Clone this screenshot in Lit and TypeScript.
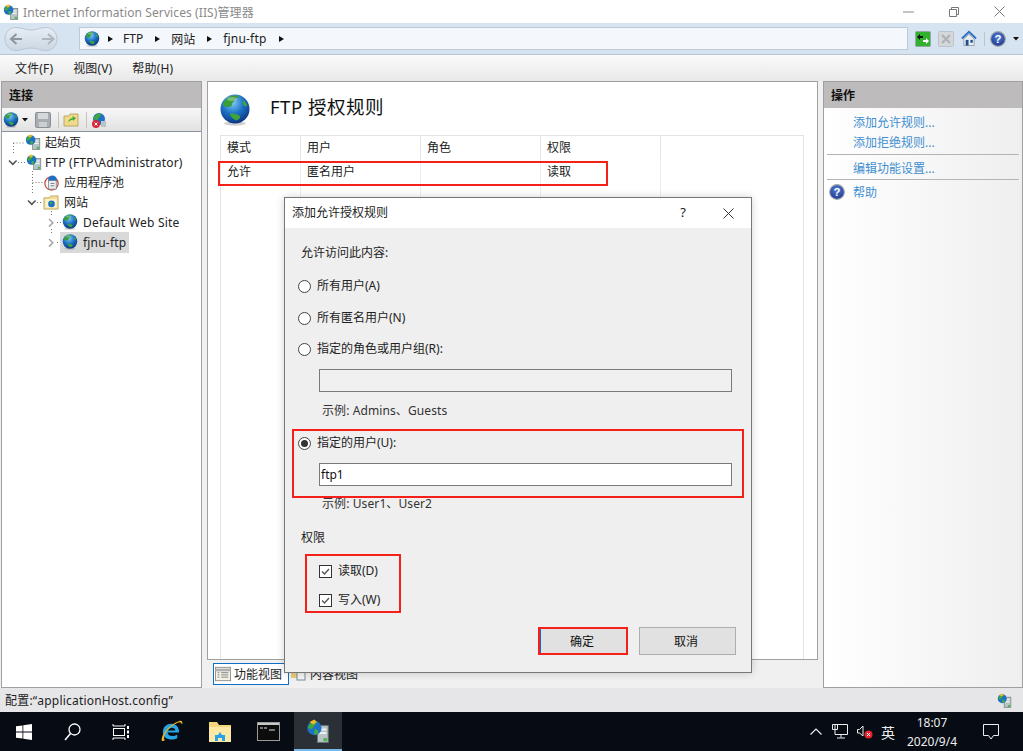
import { LitElement, html, css, svg } from "lit";
import { customElement } from "lit/decorators.js";

const globe = (s: number) => html`<svg width=${s} height=${s} viewBox="0 0 32 32" class="ico">
  <defs><radialGradient id="gb" cx="42%" cy="28%" r="78%"><stop offset="0" stop-color="#7fcbf4"/><stop offset=".5" stop-color="#1c70c6"/><stop offset="1" stop-color="#0a2c74"/></radialGradient></defs>
  <ellipse cx="16" cy="29.500" rx="11" ry="2.200" fill="#999" opacity=".45"/>
  <circle cx="16" cy="15" r="14.500" fill="url(#gb)"/>
  <path d="M10 3c3-1.300 7-1.800 10-1-1 2-3 2-4 4s-3 2.500-3 4.500-2 2.500-4 2.500-4-1-5-2C3.500 8.500 7 5 10 3z" fill="#3a9e38"/>
  <path d="M11 20c3-1 7 0 10 2 .8 1.600-1 3.500-3.500 4.500-2.500-1-6-3.500-6.500-6.500zM24 6c2 1 3.500 3 4.300 6-1.800.8-3.300 0-4.300-2z" fill="#3fa53a"/>
  <ellipse cx="13" cy="5" rx="5" ry="2" fill="#fff" opacity=".3"/>
</svg>`;

const server = (s: number) => html`<svg width=${s} height=${s} viewBox="0 0 20 20" class="ico">
  <rect x="9.500" y="5.500" width="9" height="14" fill="#b9c4c6" stroke="#67757a" stroke-width=".8"/>
  <rect x="11" y="8" width="6" height="1.500" fill="#f2f5f5"/><rect x="11" y="11" width="6" height="1.500" fill="#f2f5f5"/>
  <rect x="14.500" y="16" width="3" height="2.500" fill="#48b648"/>
  <circle cx="7" cy="7.500" r="6" fill="#1c70c6"/>
  <path d="M4 3.500c2-2 5-1.500 5-.5s-2 2-3 4-3 1.500-4 .5 1-3 2-4z" fill="#3fa83a"/>
  <path d="M7 8.500c2 0 4 1 3 3s-3 2-3 1z" fill="#46ad3c"/>
  <path d="M3 2.500l4-2 2 2-3 2z" fill="#f0b92c"/>
</svg>`;

const helpIcon = (s: number) => html`<svg width=${s} height=${s} viewBox="0 0 17 17" class="ico"><defs><radialGradient id="hb" cx="50%" cy="35%" r="65%"><stop offset="0" stop-color="#4f7fd8"/><stop offset="1" stop-color="#22388f"/></radialGradient></defs><circle cx="8.500" cy="8.500" r="7.800" fill="url(#hb)" stroke="#a0a4aa" stroke-width="1.200"/><text x="8.500" y="13" text-anchor="middle" font-size="12" font-weight="bold" fill="#fff" font-family="Liberation Sans">?</text></svg>`;

const tree = svg`<g stroke="#777" stroke-dasharray="1 2" fill="none"><path d="M13.500 143V154M13.500 143H24M18 162.500H25M32.500 171V195M32.500 182.500H43M37 202.500H43M51.500 211V215M51.500 229V235M57 222.500H61M57 242.500H61"/></g>
<g fill="none" stroke-width="1.600"><path stroke="#555" d="M9 160.500l3.800 3.800 3.800-3.800M28 200.500l3.800 3.800 3.800-3.800"/><path stroke="#a8a8a8" d="M49 219l3.800 3.800-3.800 3.800M49 239l3.800 3.800-3.800 3.800"/></g>`;

@customElement("app-root")
export class AppRoot extends LitElement {
  static styles = css`
    :host { display: block; width: 1023px; height: 751px; position: relative; overflow: hidden; background: #f0f0f0;
      font-family: "Noto Sans", "Noto Sans CJK SC", sans-serif; font-size: 12px; color: #1a1a1a; }
    * { box-sizing: border-box; }
    .ico { display: block; flex: none; }
    .ls { letter-spacing: .2px; }
    .page { display: flex; flex-direction: column; height: 751px; }
    .title { height: 23px; background: #fff; display: flex; align-items: center; padding: 0 2px 0 3px; gap: 4px; color: #8a8a8a; flex: none; letter-spacing: .1px; }
    .winbtns { margin-left: auto; display: flex; align-items: center; gap: 35px; padding-right: 16px; }
    .nav { height: 32px; background: #d6e3f0; border-bottom: 1px solid #b7c4d2; display: flex; align-items: center; padding: 0 0 0 4px; flex: none; }
    .backfwd { margin-right: 21px; flex: none; display: block; }
    .crumb { width: 829px; height: 23px; background: #f4f7fb; border: 1px solid #bcc9d6; display: flex; align-items: center; padding-left: 4px; flex: none; color: #222; }
    .crumb .ar { border-left: 5px solid #111; border-top: 3.500px solid transparent; border-bottom: 3.500px solid transparent; margin: 0 11px 0 12px; }
    .crumb .ar.first { margin: 0 10px 0 8px; }
    .navtools { display: flex; align-items: center; margin-left: 7px; gap: 7px; }
    .sep { width: 1px; height: 14px; background: #bcc5cf; }
    .menu { height: 26px; background: linear-gradient(#fbfbfb, #e8e8e8); display: flex; align-items: center; padding-left: 15px; gap: 20px; flex: none; color: #222; letter-spacing: .15px; }
    .main { flex: 1; display: flex; background: #f0f0f0; padding: 0 0 0 1px; min-height: 0; }
    .panel { border: 1px solid #a0a0a0; background: #fff; display: flex; flex-direction: column; }
    .left { width: 201px; margin-right: 5px; }
    .phead { height: 26px; background: #bdbbbb; font-weight: bold; display: flex; align-items: center; padding-left: 7px; color: #111; flex: none; }
    .tools { height: 24px; background: linear-gradient(#f7f7f7, #e2e2e2); border-bottom: 1px solid #8b93a3; display: flex; align-items: center; padding: 1px 0 0 1px; flex: none; }
    .tools i { width: 1px; height: 16px; background: #c8c4b6; flex: none; }
    .treeWrap { flex: 1; position: relative; }
    .treeLines { position: absolute; left: -2px; top: -132px; width: 201px; height: 300px; pointer-events: none; }
    .row { height: 20px; display: flex; align-items: center; white-space: nowrap; color: #222; position: relative; }
    .row.a { padding-left: 23px; gap: 4px; }
    .row.b { padding-left: 24px; gap: 3px; }
    .row.c { padding-left: 41px; gap: 4px; }
    .row.d { padding-left: 60px; gap: 5px; }
    .row.e { padding-left: 58px; }
    .sel { background: #d9d9d9; padding: 0 3px 0 2px; height: 21px; display: flex; align-items: center; gap: 5px; }
    .center { width: 611px; margin-right: 5px; display: flex; flex-direction: column; }
    .content { flex: 1; border: 1px solid #a0a0a0; background: #fff; padding: 0 13px 0 12px; display: flex; flex-direction: column; min-height: 0; }
    .ctitle { height: 53px; display: flex; align-items: center; gap: 19px; font-size: 18.500px; color: #111; flex: none; letter-spacing: .5px; }
    .ctitle svg { margin-top: 3px; margin-left: -1px; }
    .ctitle span { margin-top: -5px; }
    .table { flex: 1; border: 1px solid #e4e4e4; border-bottom: none; display: grid; grid-template-columns: 80px 120px 120px 120px 1fr; grid-template-rows: 23px 23px 1fr; }
    .table > div { padding-left: 6px; display: flex; align-items: center; color: #222; border-right: 1px solid #e6eef8; }
    .table > .hd { border-right: 1px solid #e4e4e4; padding-bottom: 2px; }
    .table > .bd { align-items: flex-start; padding-top: 3px; }
    .table > div:nth-child(5n) { border-right: none; }
    .tabs { height: 28px; display: flex; align-items: flex-start; padding: 3px 0 0 6px; flex: none; }
    .tab { height: 22px; display: flex; align-items: center; gap: 3px; color: #222; flex: none; }
    .tab.on { width: 76px; padding-left: 1px; border: 1px solid #0f6fc6; background: #fff; }
    .tab.off { padding-left: 2px; }
    .right { width: 200px; background: linear-gradient(90deg, #fff, #efefef); }
    .act { color: #3f8fd0; display: flex; align-items: center; height: 20px; padding-left: 29px; }
    .divide { height: 1px; background: #b4b4b4; margin: 2px 3px 3px 3px; }
    .divide.two { margin: 1px 3px 2px 3px; }
    .acts { padding-top: 4px; }
    .help { padding-left: 5px; gap: 8px; }
    .status { height: 24px; background: #e6e6e8; display: flex; align-items: center; padding: 0 11px 0 5px; justify-content: space-between; flex: none; color: #222; }
    .task { height: 39px; background: #060b14; display: flex; align-items: stretch; flex: none; color: #fff; }
    .tb { width: 48px; display: flex; align-items: center; justify-content: center; flex: none; }
    .tb.ie { margin-left: 3px; }
    .tb.fo { margin-left: 1px; }
    .tb.on { background: #2b3036; border-bottom: 2px solid #76b9ed; margin-left: 2px; }
    .tray { margin-left: auto; display: flex; align-items: center; }
    .clock { width: 70px; text-align: center; line-height: 19px; color: #eee; margin: 0 16px 0 2px; }
    .ime { font-size: 14px; color: #eee; margin-left: 8px; }
    .tray-end { width: 16px; margin-right: 24px; display: block; flex: none; }
    .dialog { position: absolute; left: 284px; top: 197px; width: 468px; height: 476px; background: #efefef; border: 1px solid #777; box-shadow: 0 0 8px rgba(0,0,0,.18); display: flex; flex-direction: column; }
    .dtitle { height: 30px; background: #fff; display: flex; align-items: center; padding: 0 17px 2px 7px; color: #222; flex: none; }
    .dtitle .q { margin-left: auto; font-size: 13px; margin-right: 37px; }
    .dtitle svg { margin-top: 2px; }
    .dbody { flex: 1; padding: 16px 15px 0 16px; display: flex; flex-direction: column; color: #222; }
    .lbl { height: 16px; display: flex; align-items: center; flex: none; }
    .radio { display: flex; align-items: center; gap: 6px; height: 16px; margin-left: -3px; flex: none; }
    .rc { width: 13px; height: 13px; border-radius: 50%; border: 1px solid #444; background: #fff; display: flex; align-items: center; justify-content: center; flex: none; margin-top: 2px; }
    .rc.on::after { content: ""; width: 7px; height: 7px; border-radius: 50%; background: #333; }
    .field { height: 23px; margin: 12px 4px 0 18px; border: 1px solid #7a7a7a; background: #fff; display: flex; align-items: center; padding-left: 1px; color: #111; flex: none; }
    .field.dis { background: #f0f0f0; }
    .ex { margin-left: 21px; height: 16px; display: flex; align-items: center; color: #333; flex: none; letter-spacing: .1px; }
    .chk { display: flex; align-items: center; gap: 6px; height: 16px; margin-left: 18px; flex: none; }
    .cb { width: 13px; height: 13px; border: 1px solid #333; background: #fff; flex: none; display: flex; margin-top: 2px; }
    .btns { display: flex; justify-content: flex-end; gap: 11px; margin-top: 20px; flex: none; }
    .btn { width: 97px; height: 28px; background: #e1e1e1; border: 1px solid #adadad; display: flex; align-items: center; justify-content: center; color: #111; padding-right: 3px; }
    .btn.def { border: 2px solid #0f6fc6; width: 89px; }
    .mt15 { margin-top: 15px; } .mt16 { margin-top: 16px; } .mt17 { margin-top: 17px; }
    .mt13 { margin-top: 13px; } .mt10 { margin-top: 10px; } .mt9 { margin-top: 9px; } .mt18 { margin-top: 18px; }
    .mark { position: absolute; border: 2px solid #f6201a; pointer-events: none; }
    .m1 { left: 218px; top: 161px; width: 390px; height: 25px; }
    .m2 { left: 292px; top: 429px; width: 452px; height: 69px; }
    .m3 { left: 305px; top: 554px; width: 96px; height: 59px; }
    .m4 { left: 538px; top: 627px; width: 90px; height: 28px; }
    .g1 { margin-left: 3px; } .g3 { margin-left: 7px; } .g4 { margin-left: 4px; }
    .t10 { margin-left: 10px; } .t9 { margin-left: 9px; }
    .hshift { margin-left: -2px; }
  `;

  render() {
    const check = html`<svg width="11" height="11" viewBox="0 0 11 11"><path d="M2 5.500l2.500 2.500L9 3" stroke="#555" stroke-width="1.300" fill="none"/></svg>`;
    const drop = (cls: string) => html`<svg class=${cls} width="6" height="4" viewBox="0 0 6 4"><path d="M0 0h6L3 3.500z" fill="#111"/></svg>`;
    return html`
      <div class="page">
        <div class="title">
          ${server(16)}
          <span>Internet Information Services (IIS)管理器</span>
          <div class="winbtns">
            <svg width="11" height="2" viewBox="0 0 11 2"><path d="M0 1h11" stroke="#8a8a8a"/></svg>
            <svg width="10" height="10" viewBox="0 0 10 10"><path d="M2.500 2.500V.5h7v7h-2M.5 2.500h7v7h-7z" stroke="#777" fill="none"/></svg>
            <svg width="11" height="11" viewBox="0 0 11 11"><path d="M.5.500l10 10M10.500.500l-10 10" stroke="#777" fill="none"/></svg>
          </div>
        </div>
        <div class="nav">
          <svg class="backfwd" width="54" height="26" viewBox="0 0 54 26">
            <defs><linearGradient id="bf" x1="0" y1="0" x2="0" y2="1"><stop offset="0" stop-color="#e6edf5"/><stop offset="1" stop-color="#ccd7e3"/></linearGradient></defs>
            <path d="M12 1.500c6 0 9 2.500 15 2.500s9-2.500 15-2.500c6.500 0 11 5 11 11.500s-4.500 11.500-11 11.500c-6 0-9-2.500-15-2.500s-9 2.500-15 2.500C5.500 24.500 1 19.500 1 13S5.500 1.500 12 1.500z" fill="url(#bf)" stroke="#bcc6d1"/>
            <path d="M18 13H8M12.500 8L7 13l5.500 5" stroke="#8d97a1" stroke-width="2" fill="none"/>
            <path d="M38 13h10M44 8l5.500 5-5.500 5" stroke="#aeb6bf" stroke-width="2" fill="none"/>
          </svg>
          <div class="crumb">
            ${globe(16)}<span class="ar first"></span><span>FTP</span><span class="ar"></span><span>网站</span><span class="ar"></span><span class="ls">fjnu-ftp</span><span class="ar"></span>
          </div>
          <div class="navtools">
            <svg width="16" height="16" viewBox="0 0 16 16"><rect x=".5" y=".5" width="15" height="15" rx="1" fill="#32b12e" stroke="#9aa6a6"/><path d="M2 6l3-3v2h3v2H5v2z" fill="#111"/><path d="M14 10l-3 3v-2H8V9h3V7z" fill="#fff"/></svg>
            <svg width="16" height="16" viewBox="0 0 16 16"><rect x=".5" y=".5" width="15" height="15" rx="1" fill="#d5d8db" stroke="#bcc2c8"/><path d="M4 4l8 8M12 4l-8 8" stroke="#aeb2b6" stroke-width="2.400"/></svg>
            <svg width="16" height="17" viewBox="0 0 17 17"><path d="M1 8.500L8.500 1.500 16 8.500" fill="none" stroke="#2d6fc0" stroke-width="2"/><path d="M3 9l5.500-5L14 9v7H3z" fill="#e9edf0" stroke="#7b8792" stroke-width=".7"/><rect x="5" y="10" width="3" height="6" fill="#1f4f8f"/><rect x="10" y="10" width="2.500" height="3" fill="#1f4f8f"/></svg>
            <span class="sep"></span>
            <span class="hshift">${helpIcon(16)}</span>
            ${drop("")}
          </div>
        </div>
        <div class="menu"><span>文件(F)</span><span>视图(V)</span><span>帮助(H)</span></div>
        <div class="main">
          <div class="panel left">
            <div class="phead">连接</div>
            <div class="tools">
              ${globe(16)}
              ${drop("g1")}
              <svg class="g3" width="16" height="16" viewBox="0 0 16 16"><rect x=".5" y=".5" width="15" height="15" rx="1" fill="#a8adb2" stroke="#8a8f94"/><rect x="3" y="1" width="10" height="6" fill="#d6d9dc"/><rect x="4" y="10" width="8" height="5" fill="#ccd0d3"/></svg>
              <i class="g3"></i>
              <svg class="g4" width="16" height="16" viewBox="0 0 16 16"><path d="M1 4h5l1-2h8v12H1z" fill="#efd98a" stroke="#b39a4c" stroke-width=".8"/><path d="M5 10c1-3 3-4 5-4l-1-2 4 2-3 3V7.500C8 8 6.500 9 5 10z" fill="#3aa83a"/></svg>
              <i class="g3"></i>
              <svg class="g4" width="17" height="17" viewBox="0 0 17 17"><circle cx="8" cy="7" r="6" fill="#1c6fc4"/><path d="M5 3c2-2 5-1 5 0s-2 2-3 4-3 1-4 0 1-3 2-4z" fill="#3fa83a"/><rect x="10" y="9" width="5" height="6" fill="#b9c4c6"/><circle cx="5" cy="12" r="4" fill="#d9263a"/><path d="M3.500 10.500l3 3M6.500 10.500l-3 3" stroke="#fff"/></svg>
            </div>
            <div class="treeWrap">
              <svg class="treeLines" viewBox="0 0 201 300">${tree}</svg>
              <div class="row a">${server(16)}<span>起始页</span></div>
              <div class="row b">${server(16)}<span class="ls">FTP (FTP\\Administrator)</span></div>
              <div class="row c"><svg width="17" height="17" viewBox="0 0 18 18" class="ico"><circle cx="9" cy="10" r="7" fill="none" stroke="#c8473a" stroke-width="1.300"/><circle cx="10" cy="6" r="4.500" fill="#1c6fc4"/><rect x="6" y="7" width="8" height="9" fill="#eef1f3" stroke="#6c7a86" stroke-width=".8"/><path d="M8 10h4M8 12.500h4" stroke="#6c7a86"/></svg><span>应用程序池</span></div>
              <div class="row c"><svg width="17" height="17" viewBox="0 0 18 18" class="ico"><path d="M1 4h6l1-2h8v14H1z" fill="#f2dc95" stroke="#b79f55" stroke-width=".8"/><rect x="2.500" y="5.500" width="12" height="9" fill="#fdf4cf"/><circle cx="9" cy="10.500" r="3.500" fill="#1c6fc4"/><path d="M7 9c1-1 3-1 3 0s-2 2-2 2z" fill="#46ad3c"/></svg><span>网站</span></div>
              <div class="row d">${globe(16)}<span class="ls">Default Web Site</span></div>
              <div class="row e"><span class="sel">${globe(16)}<span class="ls">fjnu-ftp</span></span></div>
            </div>
          </div>
          <div class="center">
            <div class="content">
              <div class="ctitle">${globe(32)}<span>FTP 授权规则</span></div>
              <div class="table">
                <div class="hd">模式</div><div class="hd">用户</div><div class="hd">角色</div><div class="hd">权限</div><div class="hd"></div>
                <div class="bd">允许</div><div class="bd">匿名用户</div><div class="bd"></div><div class="bd">读取</div><div class="bd"></div>
                <div></div><div></div><div></div><div></div><div></div>
              </div>
            </div>
            <div class="tabs">
              <div class="tab on"><svg width="16" height="16" viewBox="0 0 18 18"><rect x=".5" y="1.500" width="17" height="15" fill="#f4f1e4" stroke="#8b8b8b"/><path d="M.5 4.500h17" stroke="#b0b0b0" stroke-width="3"/><path d="M3 7.500h2M3 10h2M3 12.500h2M7 7.500h8M7 10h8M7 12.500h8" stroke="#777"/></svg><span>功能视图</span></div>
              <div class="tab off"><svg width="16" height="16" viewBox="0 0 16 16"><path d="M0 4h6v8H0z" fill="#e9cd7c"/><rect x="6" y="3" width="8" height="11" fill="#f2f4f6" stroke="#7b8a96"/></svg><span>内容视图</span></div>
            </div>
          </div>
          <div class="panel right">
            <div class="phead">操作</div>
            <div class="acts">
              <div class="act">添加允许规则...</div>
              <div class="act">添加拒绝规则...</div>
              <div class="divide"></div>
              <div class="act">编辑功能设置...</div>
              <div class="divide two"></div>
              <div class="act help">${helpIcon(16)}<span>帮助</span></div>
            </div>
          </div>
        </div>
        <div class="status"><span class="ls">配置:“applicationHost.config”</span>${server(15)}</div>
        <div class="task">
          <div class="tb"><svg width="16" height="16" viewBox="0 0 16 16"><path d="M0 2.300l6.500-.9v6.200H0zM7.300 1.300L16 0v7.600H7.300zM0 8.400h6.500v6.200L0 13.700zM7.300 8.400H16V16l-8.700-1.200z" fill="#fff"/></svg></div>
          <div class="tb"><svg width="17" height="18" viewBox="0 0 17 18"><circle cx="10.500" cy="6.500" r="5.500" stroke="#fff" stroke-width="1.300" fill="none"/><path d="M6.500 10.500L1 17" stroke="#fff" stroke-width="1.500"/></svg></div>
          <div class="tb"><svg width="17" height="16" viewBox="0 0 17 16"><path d="M1 0v2h12V0M1 16v-2h12v2" stroke="#fff" fill="none"/><rect x="1.500" y="4.500" width="11" height="7" stroke="#fff" fill="none"/><rect x="15" y="2" width="2" height="3" fill="#fff"/><rect x="15" y="6.500" width="2" height="3" fill="#fff"/><rect x="15" y="11" width="2" height="3" fill="#fff"/></svg></div>
          <div class="tb ie"><svg width="23" height="23" viewBox="0 0 24 24"><path d="M3 13c0-6 4-9 9-9s8 4 8 9H8c0 4 6 5 10 2v4c-6 3-15 1-15-6zm5-2h8c0-4-7-4-8 0z" fill="#27a6e6"/><path d="M2 22C0 18 7 6 20 1c3-1 4 1 3 4-1-3-3-3-5-2C9 7 2 17 5 21c-1 1-2 1-3 1z" fill="#e8b423"/></svg></div>
          <div class="tb fo"><svg width="22" height="20" viewBox="0 0 22 20"><path d="M0 0h8l2 3h12v17H0z" fill="#f3d677"/><path d="M0 5h22v15H0z" fill="#fbe9a5"/><path d="M6 19v-6h3l2-3 2 3h3v6h-3v-3H9v3z" fill="#2da1e8"/></svg></div>
          <div class="tb"><svg width="23" height="19" viewBox="0 0 23 19"><rect x=".5" y=".5" width="22" height="18" fill="#0c0c0c" stroke="#9a9a9a"/><rect x="1" y="1" width="21" height="2" fill="#c8c8c8"/><path d="M3 6h3M7 6h3M12 8h6" stroke="#ddd"/></svg></div>
          <div class="tb on">${server(24)}</div>
          <div class="tray">
            <svg width="12" height="7" viewBox="0 0 12 7"><path d="M.5 6.500L6 1l5.500 5.500" stroke="#eee" fill="none" stroke-width="1.200"/></svg>
            <svg class="t10" width="16" height="15" viewBox="0 0 16 15"><path d="M3 .5h12.500v10H3zM.5.500h5v5h-5zM9 10.500v3M5 14h8" stroke="#eee" fill="#060b14"/></svg>
            <svg class="t9" width="16" height="14" viewBox="0 0 16 14"><path d="M.5 4.500h2L6 1v10L2.500 8h-2z" stroke="#eee" fill="none"/><circle cx="11.500" cy="9.500" r="4" fill="#e8232f"/><path d="M10 8l3 3M13 8l-3 3" stroke="#fff"/></svg>
            <span class="ime">英</span>
            <div class="clock">18:07<br />2020/9/4</div>
            <svg class="tray-end" width="16" height="16" viewBox="0 0 16 16"><path d="M.5.500h15v11h-5L8 15l-2.500-3.500h-5z" stroke="#eee" fill="none"/></svg>
          </div>
        </div>
      </div>

      <div class="dialog">
        <div class="dtitle"><span>添加允许授权规则</span><span class="q">?</span>
          <svg width="11" height="11" viewBox="0 0 11 11"><path d="M.5.500l10 10M10.500.500l-10 10" stroke="#333" fill="none"/></svg></div>
        <div class="dbody">
          <div class="lbl">允许访问此内容:</div>
          <div class="radio mt17"><span class="rc"></span>所有用户(A)</div>
          <div class="radio mt16"><span class="rc"></span>所有匿名用户(N)</div>
          <div class="radio mt15"><span class="rc"></span>指定的角色或用户组(R):</div>
          <div class="field dis mt13"></div>
          <div class="ex mt10">示例: Admins、Guests</div>
          <div class="radio mt16"><span class="rc on"></span>指定的用户(U):</div>
          <div class="field mt13">ftp1</div>
          <div class="ex mt9">示例: User1、User2</div>
          <div class="lbl mt18">权限</div>
          <div class="chk mt17"><span class="cb">${check}</span>读取(D)</div>
          <div class="chk mt13"><span class="cb">${check}</span>写入(W)</div>
          <div class="btns"><div class="btn def">确定</div><div class="btn">取消</div></div>
        </div>
      </div>

      <div class="mark m1"></div>
      <div class="mark m2"></div>
      <div class="mark m3"></div>
      <div class="mark m4"></div>
    `;
  }
}
